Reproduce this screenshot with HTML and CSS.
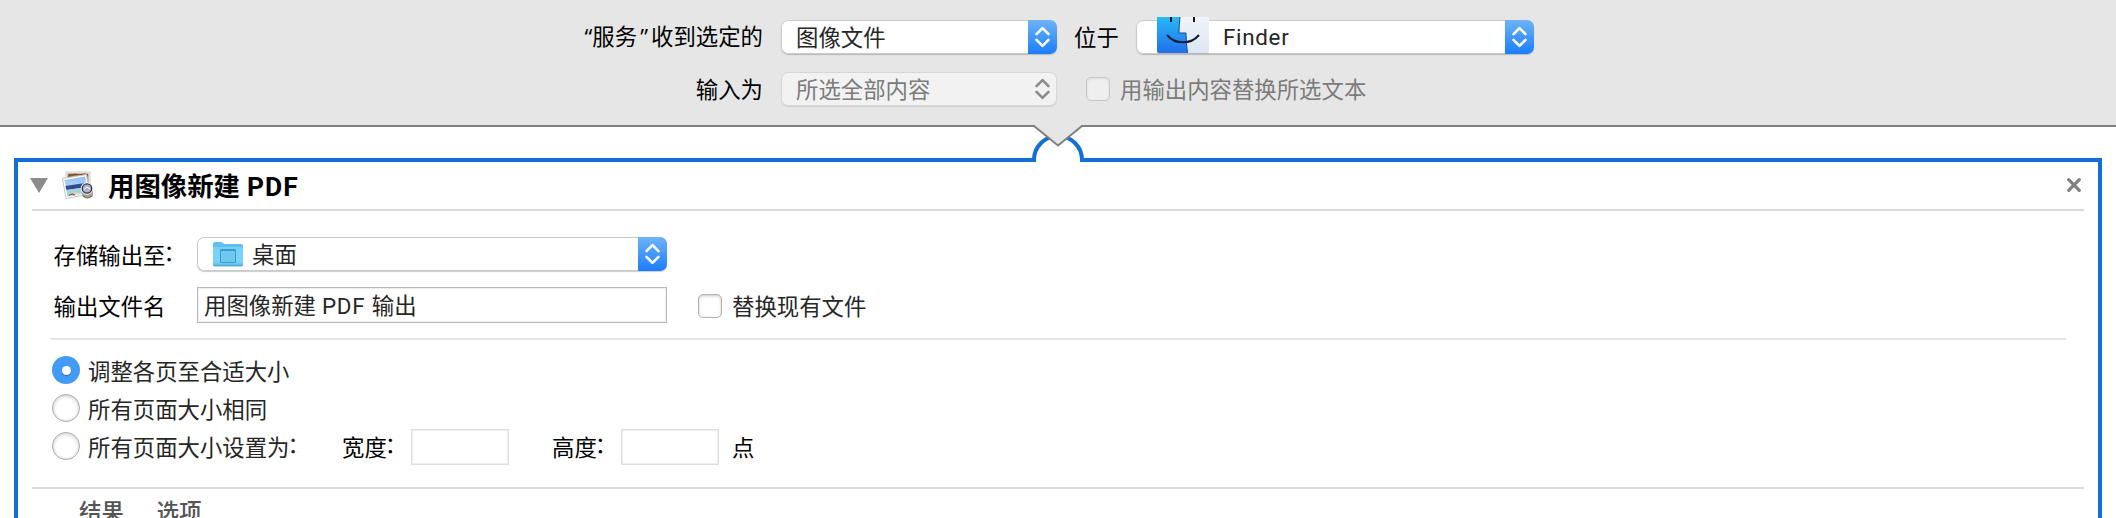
FILE: index.html
```html
<!DOCTYPE html>
<html lang="zh-CN">
<head>
<meta charset="utf-8">
<title>用图像新建 PDF</title>
<link rel="stylesheet" href="styles.css">
</head>
<body>
<header class="service">
  <div class="service-row">
    <span class="service-label"><span class="quote quote-start">“</span>服务<span class="quote quote-end">”</span>收到选定的</span>
    <div class="select select-input"><span class="select-text">图像文件</span><span class="stepper"><svg width="29" height="34" viewBox="0 0 29 34"><path d="M8.500 14.200 14.500 8.200l6 6M8.500 19.800l6 6 6-6"/></svg></span></div>
    <span class="location-label">位于</span>
    <div class="select select-app">
      <svg class="finder" width="54" height="38" viewBox="0 0 54 38">
        <defs><linearGradient id="fl" x1="0" y1="0" x2="0" y2="1"><stop offset="0" stop-color="#27b9f8"/><stop offset="1" stop-color="#236fed"/></linearGradient><linearGradient id="fr" x1="0" y1="0" x2="0" y2="1"><stop offset="0" stop-color="#f1f3f8"/><stop offset="1" stop-color="#dae7f3"/></linearGradient></defs>
        <path d="M1 36.500h52" stroke="#b5b5b5" stroke-width="1"/>
        <path d="M1 0h52v34q0 2-2 2H3q-2 0-2-2z" fill="url(#fr)"/>
        <path d="M1 0h23q-1 9-1 16h7q0 10 1.500 20H3q-2 0-2-2z" fill="url(#fl)"/>
        <path d="M24 0q-1 9-1 16h7q0 10 1.500 20" fill="none" stroke="#174f86" stroke-width="1"/>
        <path d="M15 0v5M38 0v5" stroke="#111820" stroke-width="2"/>
        <path d="M11.500 18.500C19 27.500 35 27.500 42.500 18.500" fill="none" stroke="#111d35" stroke-width="2" stroke-linecap="round"/>
      </svg>
      <span class="select-text latin">Finder</span><span class="stepper"><svg width="29" height="34" viewBox="0 0 29 34"><path d="M8.500 14.200 14.500 8.200l6 6M8.500 19.800l6 6 6-6"/></svg></span>
    </div>
  </div>
  <div class="service-row">
    <span class="service-label">输入为</span>
    <div class="select select-input disabled"><span class="select-text">所选全部内容</span><span class="stepper"><svg width="29" height="34" viewBox="0 0 29 34"><path d="M8.500 14.200 14.500 8.200l6 6M8.500 19.800l6 6 6-6"/></svg></span></div>
    <span class="check check-disabled"></span>
    <span class="disabled-label">用输出内容替换所选文本</span>
  </div>
</header>
<main class="workflow">
  <svg class="connector" width="56" height="40" viewBox="0 0 56 40">
    <path d="M6 39V33h44v6z" fill="#fff"/>
    <path d="M4 37v-2a24 24 0 0 1 48 0v2" fill="#fff" stroke="#126fd6" stroke-width="4"/>
    <path d="M4 0 28 20.500 52 0z" fill="#e6e6e6"/>
    <path d="M3.500 1H4L28 20.500 52 1h.5" fill="none" stroke="#808080" stroke-width="2"/>
  </svg>
  <section class="action">
    <div class="action-head">
      <svg class="disclosure" width="18" height="15" viewBox="0 0 18 15"><path d="M0 0h18L9 15z" fill="#8c8c8c"/></svg>
      <svg class="preview" width="34" height="32" viewBox="0 0 34 32">
        <defs><linearGradient id="sky" x1="0" y1="0" x2="0" y2="1"><stop offset="0" stop-color="#8fbdf5"/><stop offset="1" stop-color="#d5e8fb"/></linearGradient></defs>
        <path d="M5 2h24v21H5z" fill="#fff" stroke="#c9c9c9"/>
        <path d="M6.500 3.500h21v17h-21z" fill="#96754b"/><path d="M8 5h4l2-1 4 1 6-1 3 1" stroke="#654721" fill="none"/>
        <path d="M1.500 8.500 25.500 4.500 28.500 24 5 28.500z" fill="#fff" stroke="#c4c4c4"/>
        <path d="M3.500 10 24.200 6.500 26.500 22.500 6.500 26.500z" fill="url(#sky)"/>
        <path d="M4.500 16 25.500 12.800l.7 4.200L5.400 20z" fill="#2f4990"/>
        <path d="M5.500 20 26.200 17l.6 5.500L6.500 26.500z" fill="#a5d2dc"/>
        <path d="m6.500 26.500 4-3 5-1 5 1.200z" fill="#e8d9bd"/><path d="m8 25.500 3-1.500 3 1" stroke="#4b4635" fill="none"/>
        <path d="M21 19v7q5.500 5 11 0v-7z" fill="#a49d91"/>
        <path d="M22 26q4.500 3.500 9 0" fill="none" stroke="#77736b"/>
        <circle cx="26" cy="18.500" r="5.300" fill="#c9d3e3" stroke="#f1f1f1" stroke-width="2"/>
        <circle cx="26" cy="18.500" r="4.700" fill="#a9b5ca" stroke="#353a45" stroke-width="1.300"/><path d="m23 19.500 3-2.500 3 2" stroke="#fff" fill="none"/>
      </svg>
      <h1 class="action-title">用图像新建 <span class="latin">PDF</span></h1>
      <svg class="close" width="14" height="14" viewBox="0 0 14 14"><path d="m1.700 1.700 10.600 10.600m0-10.600L1.700 12.300"/></svg>
    </div>
    <div class="action-body">
      <div class="form">
        <span class="form-label">存储输出至<span class="colon">：</span></span>
        <div class="select select-folder">
          <svg class="folder" width="30" height="25" viewBox="0 0 30 25">
            <path d="M0 2q0-2 2-2h6q1 0 2 1l1 1h17q2 0 2 2v19q0 1.500-2 1.500H2Q0 24.500 0 23z" fill="#62bfe9"/>
            <path d="M0 6q0-1 1-1h28q1 0 1 1v15.500H0z" fill="#79d1f8"/><path d="M.5 23.500h29" stroke="#4fabd4"/>
            <path d="M7.500 7.500h15v13h-15z" fill="#70c7ef" stroke="#359dcc"/><path d="M8 8.500h14" stroke="#359dcc"/>
          </svg>
          <span class="select-text">桌面</span><span class="stepper"><svg width="29" height="34" viewBox="0 0 29 34"><path d="M8.500 14.200 14.500 8.200l6 6M8.500 19.800l6 6 6-6"/></svg></span>
        </div>
        <span class="form-label">输出文件名</span>
        <div class="filename-row">
          <div class="field filename">用图像新建 <span class="latin">PDF</span> 输出</div>
          <span class="check"></span><span class="soft">替换现有文件</span>
        </div>
      </div>
      <div class="options">
        <div class="option"><span class="radio selected"></span><span class="soft">调整各页至合适大小</span></div>
        <div class="option"><span class="radio"></span><span class="soft">所有页面大小相同</span></div>
        <div class="option"><span class="radio"></span><span class="soft size-label">所有页面大小设置为<span class="colon">：</span></span>
          <span class="dim-label">宽度<span class="colon">：</span></span><div class="field dim"></div>
          <span class="dim-label second">高度<span class="colon">：</span></span><div class="field dim"></div><span class="unit">点</span>
        </div>
      </div>
    </div>
    <footer class="action-foot"><span>结果</span><span>选项</span></footer>
  </section>
</main>
</body>
</html>
```

FILE: styles.css
```css
* { box-sizing: border-box; }
body {
  margin: 0;
  height: 518px;
  overflow: hidden;
  background: #fff;
  color: #000;
  font: 22.4px/34px "Noto Sans CJK SC", sans-serif;
  white-space: nowrap;
}
svg { display: block; flex: none; }
.latin { font-family: Roboto, "Noto Sans CJK SC", sans-serif; letter-spacing: .7px; }

.service {
  height: 127px;
  padding-top: 20px;
  display: flex;
  flex-direction: column;
  gap: 18px;
  background: #e6e6e6;
  border-bottom: 2px solid #808080;
}
.service-row { display: flex; align-items: center; height: 34px; }
.service-label { width: 763px; margin-right: 18px; text-align: right; }
.quote { display: inline-block; width: 12px; font-family: "Open Sans", sans-serif; }
.quote-start { text-align: right; }
.quote-end { width: 14px; text-align: center; }
.service-label, .location-label, .disabled-label { padding-bottom: 2px; }
.location-label { width: 45px; margin: 0 17px 0 17px; }
.disabled-label { margin-left: 10px; color: #7b7b7b; }

.select {
  display: flex;
  align-items: center;
  height: 34px;
  padding-left: 15px;
  border-radius: 7px;
  background: #fff;
  box-shadow: inset 0 0 0 1px #cacaca, 0 1px 1px rgba(0, 0, 0, .2);
}
.select-input { width: 276px; }
.select-app { width: 398px; padding-left: 20px; }
.select-folder { width: 470px; padding-left: 16px; }
.select-text { flex: 1; padding-bottom: 2px; color: #262626; }
.select-text.latin { padding: 0; }
.stepper {
  width: 29px;
  height: 34px;
  border-radius: 0 7px 7px 0;
  background: linear-gradient(#6db3f8, #1a7dff);
}
.stepper path { fill: none; stroke: #fff; stroke-width: 2.6; stroke-linecap: round; stroke-linejoin: round; }
.disabled { background: #f2f2f2; box-shadow: inset 0 0 0 1px #d6d6d6, 0 1px 1px rgba(0, 0, 0, .1); }
.disabled .select-text { color: #7b7b7b; }
.disabled .stepper { background: none; }
.disabled .stepper path { stroke: #8b8b8b; }
.finder { margin: -3px 13px 0 0; }
.folder { margin-right: 9px; }

.check {
  flex: none;
  width: 24px;
  height: 24px;
  border: 1px solid #b3b3b3;
  border-radius: 5px;
  background: #fff;
  box-shadow: inset 0 1px 3px rgba(0, 0, 0, .22);
}
.check-disabled { margin-left: 29px; background: #efefef; border-color: #c6c6c6; box-shadow: inset 0 1px 3px rgba(0, 0, 0, .08); }

.workflow { position: relative; padding: 31px 14px 0; }
.connector { position: absolute; left: 1030px; top: -2px; }
.action { height: 380px; border: 4px solid #126fd6; border-bottom: 0; padding: 0 14px; }
.action-head {
  display: flex;
  align-items: center;
  height: 49px;
  border-bottom: 2px solid #d9d9d9;
}
.disclosure { margin: -1px 0 0 -2px; }
.preview { margin: 0 13px 0 13px; }
.action-title { flex: 1; margin: 0; font-size: 26.4px; line-height: 40px; font-weight: 700; }
.action-title .latin { margin-left: 1px; letter-spacing: 1.1px; }
.close { margin: -2px 3px 0 0; }
.close path { stroke: #808080; stroke-width: 3.2; stroke-linecap: round; }

.action-body { height: 278px; padding: 26px 18px 0; border-bottom: 2px solid #d9d9d9; }
.form {
  display: grid;
  grid-template-columns: 143.5px 1fr;
  grid-template-rows: 34px 36px;
  row-gap: 16px;
  padding: 0 0 15px 3.5px;
  align-items: center;
}
.form-label { padding-bottom: 1px; }
.colon { position: relative; top: -3px; left: -2px; display: inline-block; width: 10px; }
.filename-row { display: flex; align-items: center; }
.field { height: 36px; border: 1px solid #bababa; box-shadow: inset 0 0 0 1px #ededed; background: #fff; }
.filename { width: 470px; padding-left: 6px; margin-right: 31px; line-height: 33px; color: #262626; }
.filename .latin { margin: 0 1.5px 0 1px; }
.soft { color: #262626; }
.filename-row .check { margin-top: 2px; }
.filename-row .soft { margin-left: 10px; }
.options { border-top: 2px solid #e6e6e6; padding-top: 11px; }
.option { display: flex; align-items: center; height: 38px; padding-left: 2px; }
.radio {
  display: grid;
  place-items: center;
  width: 28px;
  height: 28px;
  margin-right: 8px;
  border: 1px solid #a9a9a9;
  border-radius: 50%;
  box-shadow: inset 0 1px 4px rgba(0, 0, 0, .2);
}
.selected { border: 0; background: #429bf8; box-shadow: none; }
.selected::after { content: ""; width: 9px; height: 9px; border-radius: 50%; background: #fff; box-shadow: 0 1px 1px rgba(0, 0, 0, .25); }
.size-label { width: 254px; }
.dim-label { width: 69px; }
.dim-label.second { margin-left: 43px; }
.dim { width: 98px; margin-top: 2px; border-color: #dedede; }
.unit { margin-left: 13px; }
.action-foot { display: flex; gap: 33px; padding: 4px 0 0 47px; color: #555; font-weight: 500; }
```
